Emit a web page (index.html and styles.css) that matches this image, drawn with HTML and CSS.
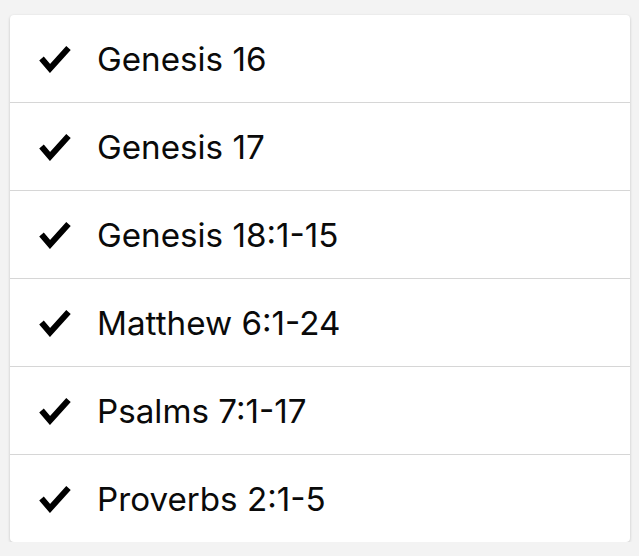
FILE: index.html
```html
<!DOCTYPE html>
<html>
<head>
<meta charset="utf-8">
<link rel="stylesheet" href="styles.css">
</head>
<body>
<div class="card">
  <div class="row"><svg class="check" viewBox="0 0 32 28"><path d="M2.5 13.5 L11 23.5 L29.5 3" /></svg><span class="label">Genesis 16</span></div>
  <div class="row"><svg class="check" viewBox="0 0 32 28"><path d="M2.5 13.5 L11 23.5 L29.5 3" /></svg><span class="label">Genesis 17</span></div>
  <div class="row"><svg class="check" viewBox="0 0 32 28"><path d="M2.5 13.5 L11 23.5 L29.5 3" /></svg><span class="label">Genesis 18:1-15</span></div>
  <div class="row"><svg class="check" viewBox="0 0 32 28"><path d="M2.5 13.5 L11 23.5 L29.5 3" /></svg><span class="label">Matthew 6:1-24</span></div>
  <div class="row"><svg class="check" viewBox="0 0 32 28"><path d="M2.5 13.5 L11 23.5 L29.5 3" /></svg><span class="label">Psalms 7:1-17</span></div>
  <div class="row"><svg class="check" viewBox="0 0 32 28"><path d="M2.5 13.5 L11 23.5 L29.5 3" /></svg><span class="label">Proverbs 2:1-5</span></div>
</div>
</body>
</html>
```
FILE: styles.css
```css
html, body {
  margin: 0;
  padding: 0;
  background: #f3f3f3;
}
body {
  padding: 15px 9px 0 10px;
  font-family: Inter, "Liberation Sans", Arial, sans-serif;
}
.card {
  background: #fff;
  border-radius: 4px;
  box-shadow: 0 1px 3px rgba(0,0,0,0.2);
  overflow: hidden;
}
.row {
  height: 87px;
  display: flex;
  align-items: center;
  border-bottom: 1px solid #d6d6d6;
  box-sizing: content-box;
}
.row:last-child {
  border-bottom: none;
}
.check {
  width: 32px;
  height: 28px;
  margin-left: 29px;
  margin-right: 26px;
  margin-top: 1px;
  fill: none;
  stroke: #000;
  stroke-width: 6;
  stroke-linejoin: miter;
  stroke-linecap: butt;
}
.label {
  font-size: 33.2px;
  color: #0a0a0a;
}
```
